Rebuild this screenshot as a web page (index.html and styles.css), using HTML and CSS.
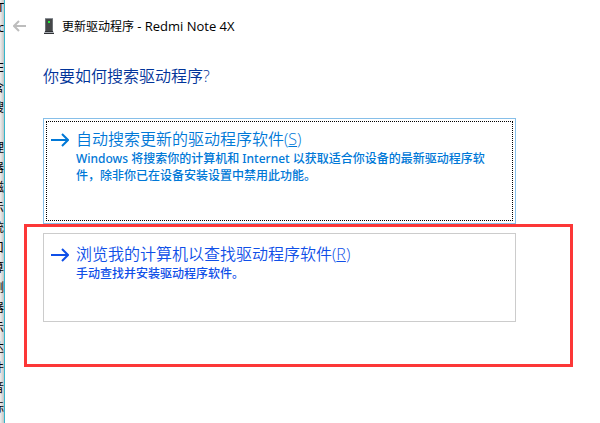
FILE: index.html
```html
<!DOCTYPE html>
<html lang="zh-CN">
<head>
<meta charset="utf-8">
<title>更新驱动程序</title>
<link rel="stylesheet" href="styles.css">
</head>
<body>
<div class="desktop">
  <ul class="tree">
    <li>T</li><li>c</li><li></li><li>E</li><li>含</li><li>搜</li><li></li><li>理</li><li>器</li><li>磁</li><li>示</li><li>统</li><li>口</li><li>算</li><li>测</li><li>器</li><li>示</li><li>达</li><li>件</li><li>音</li><li>标</li>
  </ul>
  <main class="wizard">
    <header class="titlebar">
      <button class="back" type="button" aria-label="返回">
        <svg width="14" height="12" viewBox="0 0 14 12"><path d="M1 6H13M6 1L1 6L6 11" fill="none" stroke="#bdbdbd" stroke-width="2"/></svg>
      </button>
      <svg class="device" width="10" height="16" viewBox="0 0 10 16"><path d="M1 0H9V13H1Z" fill="#454749"/><path d="M1 0H9V1H1Z" fill="#8b9096"/><path d="M1 1H2V13H1ZM8 1H9V13H8Z" fill="#6e7276"/><path d="M1 13H9L10 15H0Z" fill="#a9adb3"/><path d="M1 13H9V14H1ZM0 15H10V16H0Z" fill="#303236"/><path d="M4 3H6V5H4Z" fill="#20f038"/></svg>
      <span class="caption">更新驱动程序 <span class="model">- Redmi Note 4X</span></span>
    </header>
    <h1 class="question">你要如何搜索驱动程序?</h1>
    <div class="choices">
      <button class="choice choice-focused" type="button">
        <span class="focus">
          <svg class="arrow" width="18" height="14" viewBox="0 0 18 14"><path d="M0 7H17M11 1L17 7L11 13" fill="none" stroke="currentColor" stroke-width="2"/></svg>
          <span class="copy">
            <span class="name">自动搜索更新的驱动程序软件(<u>S</u>)</span>
            <span class="note">Windows 将搜索你的计算机和 Internet 以获取适合你设备的最新驱动程序软件，除非你已在设备安装设置中禁用此功能。</span>
          </span>
        </span>
      </button>
      <div class="second">
        <button class="choice choice-hot" type="button">
          <span class="focus">
            <svg class="arrow" width="18" height="14" viewBox="0 0 18 14"><path d="M0 7H17M11 1L17 7L11 13" fill="none" stroke="currentColor" stroke-width="2"/></svg>
            <span class="copy">
              <span class="name">浏览我的计算机以查找驱动程序软件(<u>R</u>)</span>
              <span class="note">手动查找并安装驱动程序软件。</span>
            </span>
          </span>
        </button>
        <div class="marker"></div>
      </div>
    </div>
  </main>
</div>
</body>
</html>
```
FILE: styles.css
```css
* { box-sizing: border-box; }
body {
  margin: 0;
  background: #fff;
  font-family: "Open Sans", "Noto Sans CJK SC", sans-serif;
  font-size: 12px;
  color: #000;
}
button { font: inherit; background: none; border: 0; padding: 0; }
svg { display: block; flex: none; }
.desktop { display: flex; height: 100vh; overflow: hidden; }
.tree {
  flex: none;
  width: 5px;
  margin: 0;
  padding: 0;
  list-style: none;
  overflow: hidden;
  background: linear-gradient(to right, #eee, #c4c4c4);
  border-right: 1px solid #35b5c9;
}
.tree li {
  display: flex;
  justify-content: flex-end;
  height: 20px;
  line-height: 16px;
}
.wizard { flex: 1; min-width: 0; padding: 16px 84px 0 8px; }
.titlebar { display: flex; align-items: center; height: 20px; }
.back { width: 14px; }
.device { margin-left: 17px; }
.caption { margin-left: 8px; line-height: 18px; white-space: nowrap; }
.model { font-size: 13px; }
.question {
  margin: 28px 0 0 30px;
  font-size: 16px;
  line-height: 24px;
  font-weight: 350;
  color: #003399;
}
.choices {
  display: flex;
  flex-direction: column;
  gap: 9px;
  margin: 30px 0 0 30px;
}
.choice {
  display: block;
  width: 100%;
  padding: 2px;
  border: 1px solid #ccc;
  text-align: left;
}
.choice-focused { height: 106px; border-color: #86bfe9; color: #0078d7; }
.choice-hot { height: 89px; color: #0f4fe8; }
.focus {
  display: flex;
  height: 100%;
  gap: 7px;
  padding: 7px 20px 0 4px;
  border: 1px dotted transparent;
}
.choice-focused .focus { border-color: #000; }
.arrow { margin-top: 4px; }
.name, .note { display: block; }
.name { font-size: 16px; line-height: 21px; font-weight: 350; }
.note { font-family: "Noto Sans", "Noto Sans CJK SC", sans-serif; line-height: 17px; font-weight: 500; }
.second { position: relative; }
.marker {
  position: absolute;
  inset: -9px -57px -45px -19px;
  border: 3px solid #fc3737;
  pointer-events: none;
}
```
